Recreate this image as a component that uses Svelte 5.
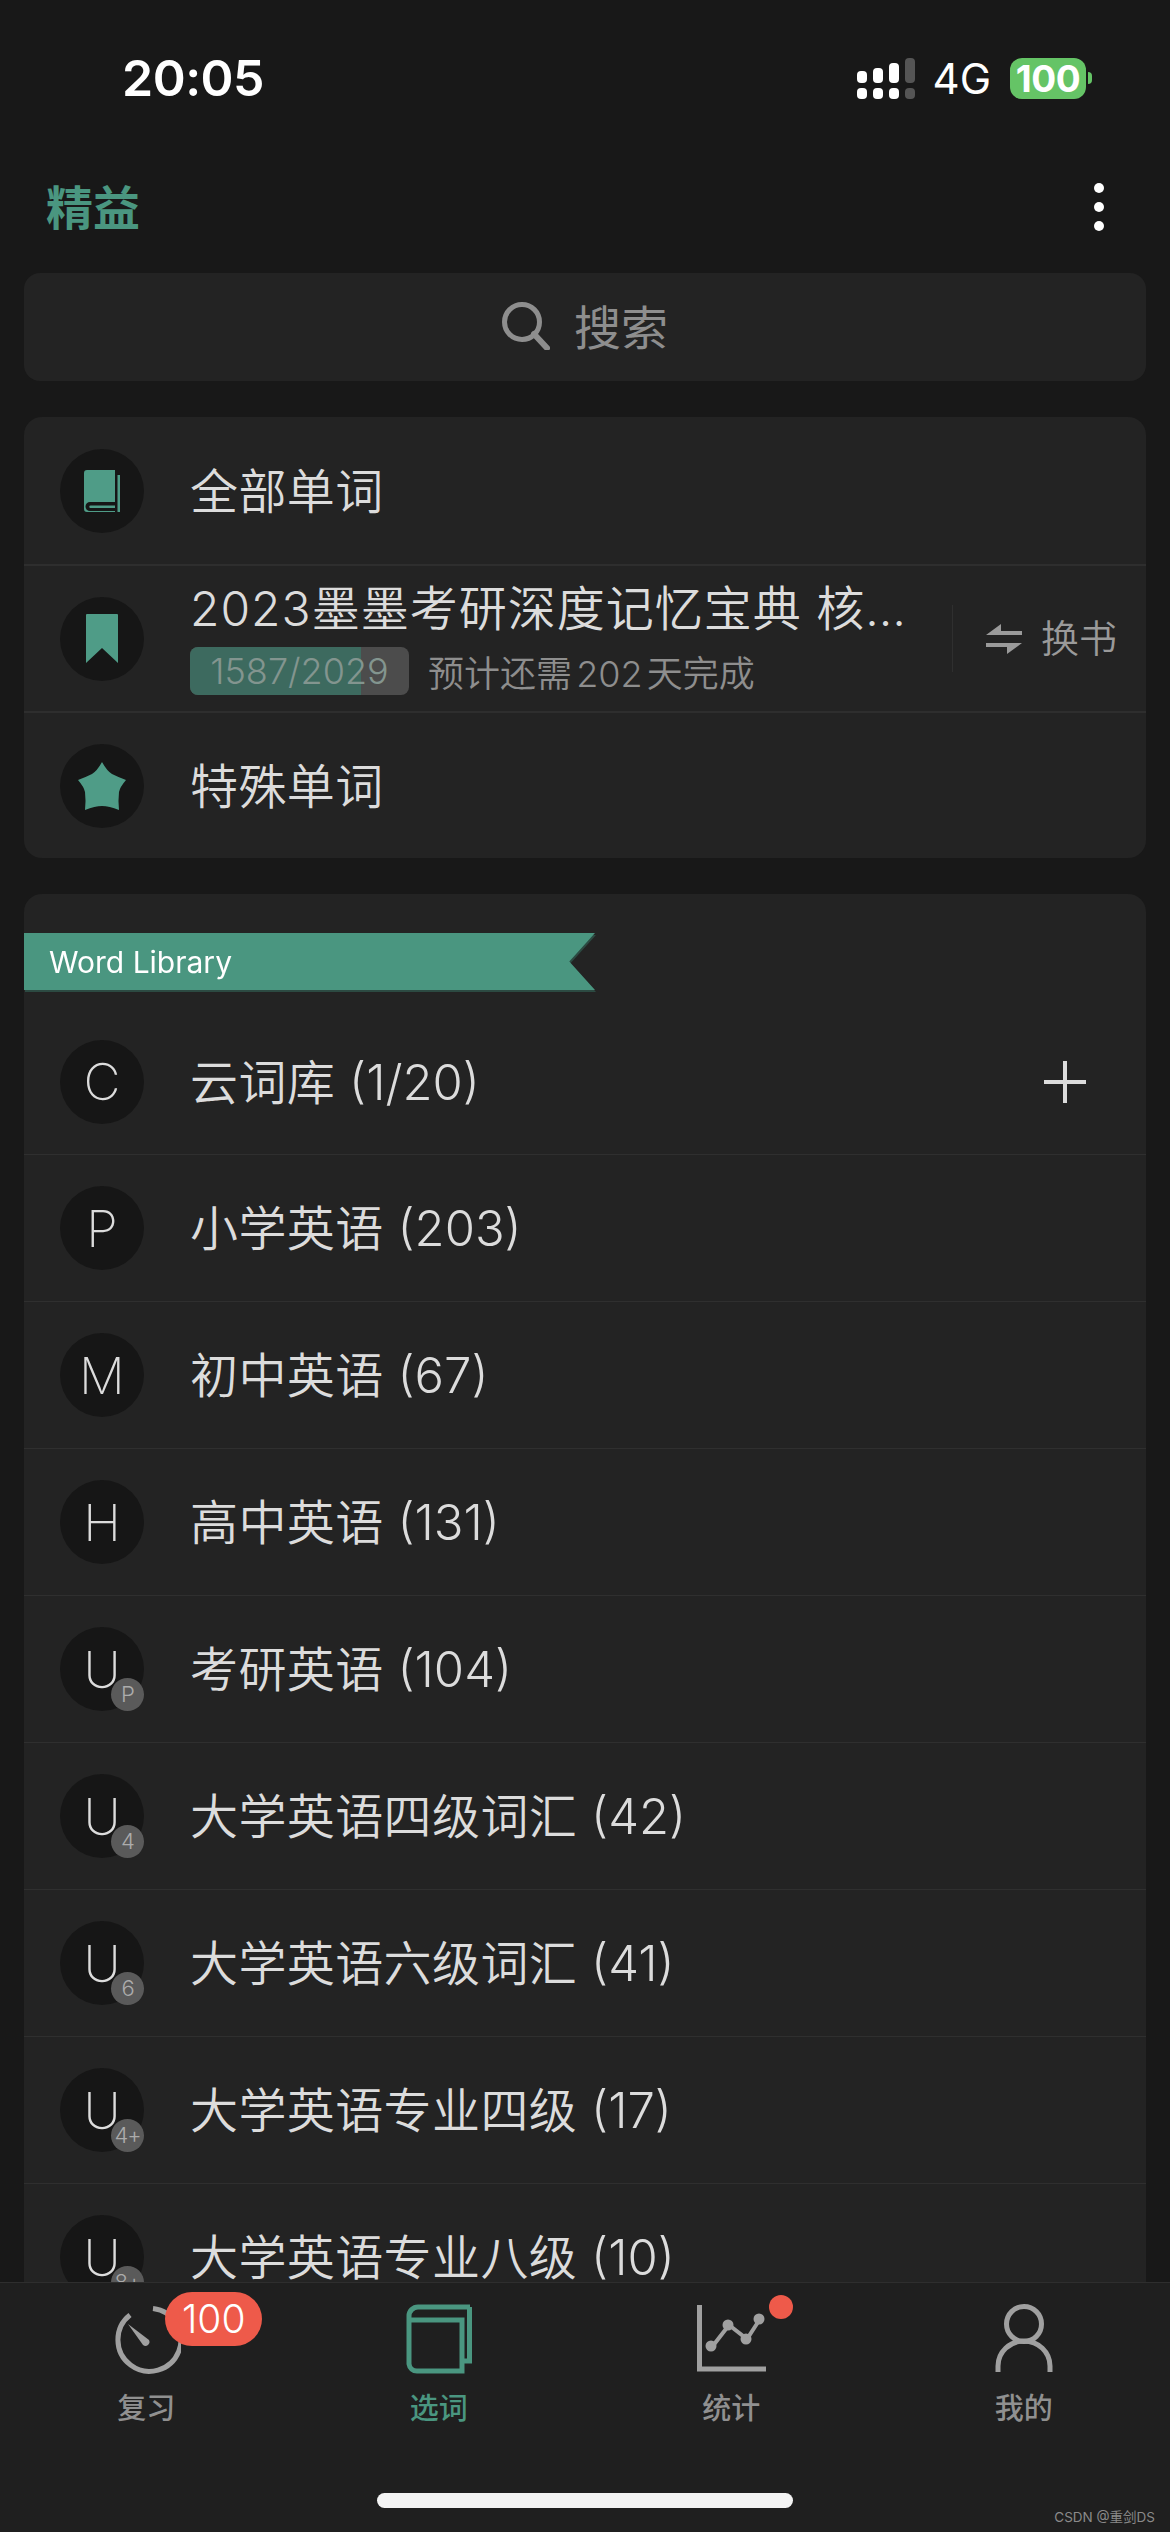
<script>
  const libraries = [
    { letter: 'C', name: '云词库', count: '1/20', add: true },
    { letter: 'P', name: '小学英语', count: '203' },
    { letter: 'M', name: '初中英语', count: '67' },
    { letter: 'H', name: '高中英语', count: '131' },
    { letter: 'U', name: '考研英语', count: '104', level: 'P' },
    { letter: 'U', name: '大学英语四级词汇', count: '42', level: '4' },
    { letter: 'U', name: '大学英语六级词汇', count: '41', level: '6' },
    { letter: 'U', name: '大学英语专业四级', count: '17', level: '4+' },
    { letter: 'U', name: '大学英语专业八级', count: '10', level: '8+' }
  ];

  const learned = 1587;
  const total = 2029;
  const progress = (learned / total) * 100;
</script>

<div class="screen">
  <div class="status">
    <span class="time">20:05</span>
    <div class="status-right">
      <div class="signal">
        <div class="sig-col"><i class="bar b1"></i><i class="dot"></i></div>
        <div class="sig-col"><i class="bar b2"></i><i class="dot"></i></div>
        <div class="sig-col"><i class="bar b3"></i><i class="dot"></i></div>
        <div class="sig-col off"><i class="bar b4"></i><i class="dot"></i></div>
      </div>
      <span class="net">4G</span>
      <div class="battery"><span>100</span></div>
      <i class="nub"></i>
    </div>
  </div>

  <div class="header">
    <span class="brand">精益</span>
    <div class="more"><i></i><i></i><i></i></div>
  </div>

  <div class="content">
    <div class="search">
      <svg width="48" height="48" viewBox="0 0 48 48" fill="none" stroke="#8e8e8e">
        <circle cx="20" cy="20" r="17.5" stroke-width="5" />
        <path d="M32 32 L45 46" stroke-width="6" stroke-linecap="round" />
      </svg>
      <span>搜索</span>
    </div>

    <div class="card">
      <div class="row">
        <div class="avatar">
          <svg width="36" height="42" viewBox="0 0 36 42">
            <path fill="#4f9c87" d="M3 0 H31 V32 H6 A4.5 4.5 0 0 0 6 41 H31 V42 H3 A3 3 0 0 1 0 39 V3 A3 3 0 0 1 3 0 Z" />
            <path fill="#4f9c87" d="M33.500 5 H36 V42 H33.500 Z M6.500 35.500 H31 V38 H6.500 A1.250 1.250 0 0 1 6.500 35.500 Z" />
          </svg>
        </div>
        <span class="label">全部单词</span>
      </div>
      <div class="row thick">
        <div class="avatar">
          <svg width="32" height="49" viewBox="0 0 32 49">
            <path fill="#4f9c87" d="M1 0 H31 A1 1 0 0 1 32 1 V49 L16 34 L0 49 V1 A1 1 0 0 1 1 0 Z" />
          </svg>
        </div>
        <div class="book">
          <div class="book-title">2023墨墨考研深度记忆宝典 核心词汇精讲</div>
          <div class="book-sub">
            <div class="progress">
              <div class="fill" style="width: {progress}%"></div>
              <span>{learned}/{total}</span>
            </div>
            <span class="remain">预计还需 202 天完成</span>
          </div>
        </div>
        <div class="swap">
          <svg width="36" height="30" viewBox="0 0 36 30">
            <path fill="#9a9a9a" d="M0 11 L15 0 V7 H36 V11 Z M0 19 H36 L21 30 V23 H0 Z" />
          </svg>
          <span>换书</span>
        </div>
      </div>
      <div class="row thick">
        <div class="avatar">
          <svg width="48" height="48" viewBox="0 0 48 48">
            <path fill="#4f9c87" d="M24 0 Q29 9 34 12 Q40 15 48 18 Q42 25 41 30 Q40 38 41 48 Q31 44 24 44 Q17 44 7 48 Q8 38 7 30 Q6 25 0 18 Q8 15 14 12 Q19 9 24 0 Z" />
          </svg>
        </div>
        <span class="label">特殊单词</span>
      </div>
    </div>

    <div class="card library">
      <div class="ribbon-wrap">
        <div class="ribbon"><span>Word Library</span></div>
      </div>
      {#each libraries as item, i}
        <div class="row" class:thin={i > 0} class:first={i === 0}>
          <div class="avatar">
            <span class="letter">{item.letter}</span>
            {#if item.level}
              <span class="level">{item.level}</span>
            {/if}
          </div>
          <span class="label">{item.name} <span class="count">({item.count})</span></span>
          {#if item.add}
            <svg class="plus" width="42" height="42" viewBox="0 0 42 42" stroke="#dcdcdc" stroke-width="4">
              <path d="M21 0 V42 M0 21 H42" />
            </svg>
          {/if}
        </div>
      {/each}
    </div>
  </div>

  <div class="tabbar">
    <div class="tab">
      <div class="tab-icon">
        <svg width="70" height="70" viewBox="0 0 70 70" fill="none">
          <path d="M19 11 A31.500 31.500 0 1 0 42 4.500" stroke="#a0a0a0" stroke-width="5" />
          <path d="M17 20 L38 36 A4 4 0 0 1 32 41 Z" fill="#a0a0a0" />
        </svg>
        <span class="badge">100</span>
      </div>
      <span class="tab-label">复习</span>
    </div>
    <div class="tab active">
      <div class="tab-icon">
        <svg width="66" height="70" viewBox="0 0 66 70" fill="none" stroke="#4a9680" stroke-width="5">
          <path d="M64 3 H12 A9 9 0 0 0 3 12 V60 A8 8 0 0 0 11 67 H56 V16 H5" />
          <path d="M63.500 3 V57 H58" />
        </svg>
      </div>
      <span class="tab-label">选词</span>
    </div>
    <div class="tab">
      <div class="tab-icon">
        <svg width="70" height="70" viewBox="0 0 70 70" fill="none">
          <path d="M3.500 1 V65 H70" stroke="#a0a0a0" stroke-width="5" />
          <path d="M16 43 L33 21 L51 35 L64 15" stroke="#a0a0a0" stroke-width="4" />
          <circle cx="15" cy="42" r="5.500" fill="#a0a0a0" />
          <circle cx="32" cy="21" r="5.500" fill="#a0a0a0" />
          <circle cx="50" cy="35" r="5.500" fill="#a0a0a0" />
          <circle cx="63" cy="15" r="5.500" fill="#a0a0a0" />
        </svg>
        <i class="red-dot"></i>
      </div>
      <span class="tab-label">统计</span>
    </div>
    <div class="tab">
      <div class="tab-icon">
        <svg width="58" height="70" viewBox="0 0 58 70" fill="none" stroke="#a0a0a0" stroke-width="5">
          <circle cx="29" cy="20" r="17.500" />
          <path d="M3 68 V62 A26 25 0 0 1 55 62 V68" />
        </svg>
      </div>
      <span class="tab-label">我的</span>
    </div>
    <div class="home"></div>
    <span class="watermark">CSDN @重剑DS</span>
  </div>
</div>

<style>
  :global(body) {
    margin: 0;
    background: #181818;
  }

  .screen {
    position: relative;
    width: 1170px;
    height: 2532px;
    display: flex;
    flex-direction: column;
    overflow: hidden;
    background: #181818;
    font-family: Inter, "Noto Sans CJK SC", sans-serif;
    color: #dcdcdc;
  }

  .status {
    flex: none;
    height: 156px;
    padding: 0 78px 0 122px;
    box-sizing: border-box;
    display: flex;
    align-items: center;
    justify-content: space-between;
  }

  .time {
    font-size: 50px;
    font-weight: 600;
    color: #fff;
    letter-spacing: -0.5px;
  }

  .status-right {
    display: flex;
    align-items: center;
  }

  .signal {
    display: flex;
    gap: 6px;
    margin-right: 18px;
  }

  .sig-col {
    width: 10px;
    height: 41px;
    display: flex;
    flex-direction: column;
    justify-content: flex-end;
    gap: 5px;
  }

  .sig-col i {
    display: block;
    background: #fff;
    border-radius: 4px;
  }

  .sig-col.off i {
    background: #555;
  }

  .bar.b1 { height: 12px; }
  .bar.b2 { height: 15px; }
  .bar.b3 { height: 20px; }
  .bar.b4 { height: 25px; }
  .dot { height: 11px; }

  .net {
    font-size: 42px;
    color: #fff;
    margin-right: 19px;
  }

  .battery {
    width: 76px;
    height: 41px;
    border-radius: 12px;
    background: #65c466;
    display: flex;
    align-items: center;
    justify-content: center;
    font-size: 37px;
    font-weight: 700;
    letter-spacing: -0.5px;
    color: #fff;
  }

  .nub {
    width: 4px;
    height: 12px;
    margin-left: 2px;
    background: #65c466;
    border-radius: 0 6px 6px 0;
  }

  .header {
    flex: none;
    height: 102px;
    padding: 0 66px 0 46px;
    display: flex;
    align-items: center;
    justify-content: space-between;
    box-sizing: border-box;
  }

  .brand {
    margin-top: -6px;
    font-size: 47px;
    font-weight: 700;
    color: #4a9680;
  }

  .more {
    display: flex;
    flex-direction: column;
    gap: 9px;
  }

  .more i {
    display: block;
    width: 10px;
    height: 10px;
    border-radius: 50%;
    background: #fff;
  }

  .content {
    flex: 1;
    min-height: 0;
    overflow: hidden;
    margin-top: 15px;
    padding: 0 24px;
    display: flex;
    flex-direction: column;
    gap: 36px;
  }

  .search {
    flex: none;
    height: 108px;
    border-radius: 16px;
    background: #232323;
    display: flex;
    align-items: center;
    justify-content: center;
    gap: 24px;
    font-size: 47px;
    color: #8e8e8e;
  }

  .search span {
    margin-top: -6px;
  }

  .search svg {
    margin-top: -2px;
  }

  .card {
    flex: none;
    background: #232323;
    border-radius: 18px;
  }

  .row {
    height: 147px;
    display: flex;
    align-items: center;
    padding-left: 36px;
    box-sizing: border-box;
  }

  .row.first {
    height: 145px;
  }

  .row.thick {
    border-top: 2px solid #2e2e2e;
  }

  .row.thin {
    border-top: 1px solid #2f2f2f;
  }

  .avatar {
    position: relative;
    flex: none;
    width: 84px;
    height: 84px;
    border-radius: 50%;
    background: #161616;
    display: flex;
    align-items: center;
    justify-content: center;
    margin-right: 46px;
  }

  .letter {
    font-size: 51px;
    font-weight: 200;
    color: #dcdcdc;
  }

  .level {
    position: absolute;
    right: 0;
    bottom: 0;
    width: 33px;
    height: 33px;
    border-radius: 50%;
    background: #5a5a5a;
    color: #acacac;
    font-size: 22px;
    font-weight: 300;
    letter-spacing: -1px;
    line-height: 33px;
    text-align: center;
  }

  .label {
    margin-top: -6px;
    font-size: 48px;
    font-weight: 350;
    letter-spacing: 0.4px;
    color: #dcdcdc;
    white-space: nowrap;
  }

  .count {
    font-size: 49px;
    font-weight: 300;
    letter-spacing: 0;
  }

  .book {
    flex: 1;
    min-width: 0;
    display: flex;
    flex-direction: column;
    gap: 8px;
  }

  .book-title {
    height: 56px;
    line-height: 56px;
    font-size: 48px;
    font-weight: 350;
    letter-spacing: 1px;
    white-space: nowrap;
    overflow: hidden;
    text-overflow: ellipsis;
  }

  .book-sub {
    display: flex;
    align-items: center;
    gap: 19px;
  }

  .progress {
    position: relative;
    width: 219px;
    height: 48px;
    border-radius: 8px;
    background: #4c4c4c;
    overflow: hidden;
    display: flex;
    align-items: center;
    justify-content: center;
    font-size: 36px;
    font-weight: 300;
    color: #83958f;
  }

  .fill {
    position: absolute;
    left: 0;
    top: 0;
    bottom: 0;
    background: #3d6a5f;
  }

  .progress span {
    position: relative;
  }

  .remain {
    font-size: 36px;
    font-weight: 350;
    word-spacing: -6px;
    color: #8e8e8e;
    white-space: nowrap;
  }

  .swap {
    flex: none;
    height: 67px;
    margin-left: 46px;
    padding: 0 29px 0 33px;
    border-left: 1px solid #2f2f2f;
    display: flex;
    align-items: center;
    gap: 19px;
    font-size: 38px;
    font-weight: 350;
    color: #9a9a9a;
  }

  .swap span {
    margin-top: -6px;
  }

  .library {
    padding-top: 39px;
  }

  .ribbon-wrap {
    margin-bottom: 19px;
    filter: drop-shadow(1px 2px 0 #2c4a42);
  }

  .ribbon {
    width: 571px;
    height: 57px;
    background: #4a9680;
    clip-path: polygon(0 0, 100% 0, 95.5% 50%, 100% 100%, 0 100%);
    display: flex;
    align-items: center;
    padding-left: 25px;
    box-sizing: border-box;
    font-size: 30px;
    color: #fff;
  }

  .plus {
    margin-left: auto;
    margin-right: 60px;
  }

  .tabbar {
    position: relative;
    flex: none;
    height: 250px;
    box-sizing: border-box;
    border-top: 1px solid #2e2e2e;
    background: #1f1f1f;
    display: grid;
    grid-template-columns: repeat(4, 1fr);
    align-items: start;
  }

  .tab {
    display: flex;
    flex-direction: column;
    align-items: center;
    padding-top: 21px;
  }

  .tab-icon {
    position: relative;
    height: 70px;
    display: flex;
    align-items: center;
    justify-content: center;
  }

  .tab-label {
    margin-top: 15px;
    font-size: 29px;
    font-weight: 500;
    line-height: 40px;
    color: #909090;
  }

  .tab.active .tab-label {
    color: #4a9680;
  }

  .badge {
    position: absolute;
    left: 54px;
    top: -12px;
    width: 97px;
    height: 54px;
    border-radius: 27px;
    background: #ee5a4a;
    color: #fff;
    font-size: 39px;
    font-weight: 300;
    line-height: 54px;
    text-align: center;
  }

  .red-dot {
    position: absolute;
    right: -27px;
    top: -9px;
    width: 24px;
    height: 24px;
    border-radius: 50%;
    background: #ee5a4a;
  }

  .home {
    position: absolute;
    left: 377px;
    bottom: 24px;
    width: 416px;
    height: 15px;
    border-radius: 8px;
    background: #f3f3f3;
  }

  .watermark {
    position: absolute;
    right: 15px;
    bottom: 6px;
    font-size: 13.5px;
    color: #8a8a8a;
  }
</style>
